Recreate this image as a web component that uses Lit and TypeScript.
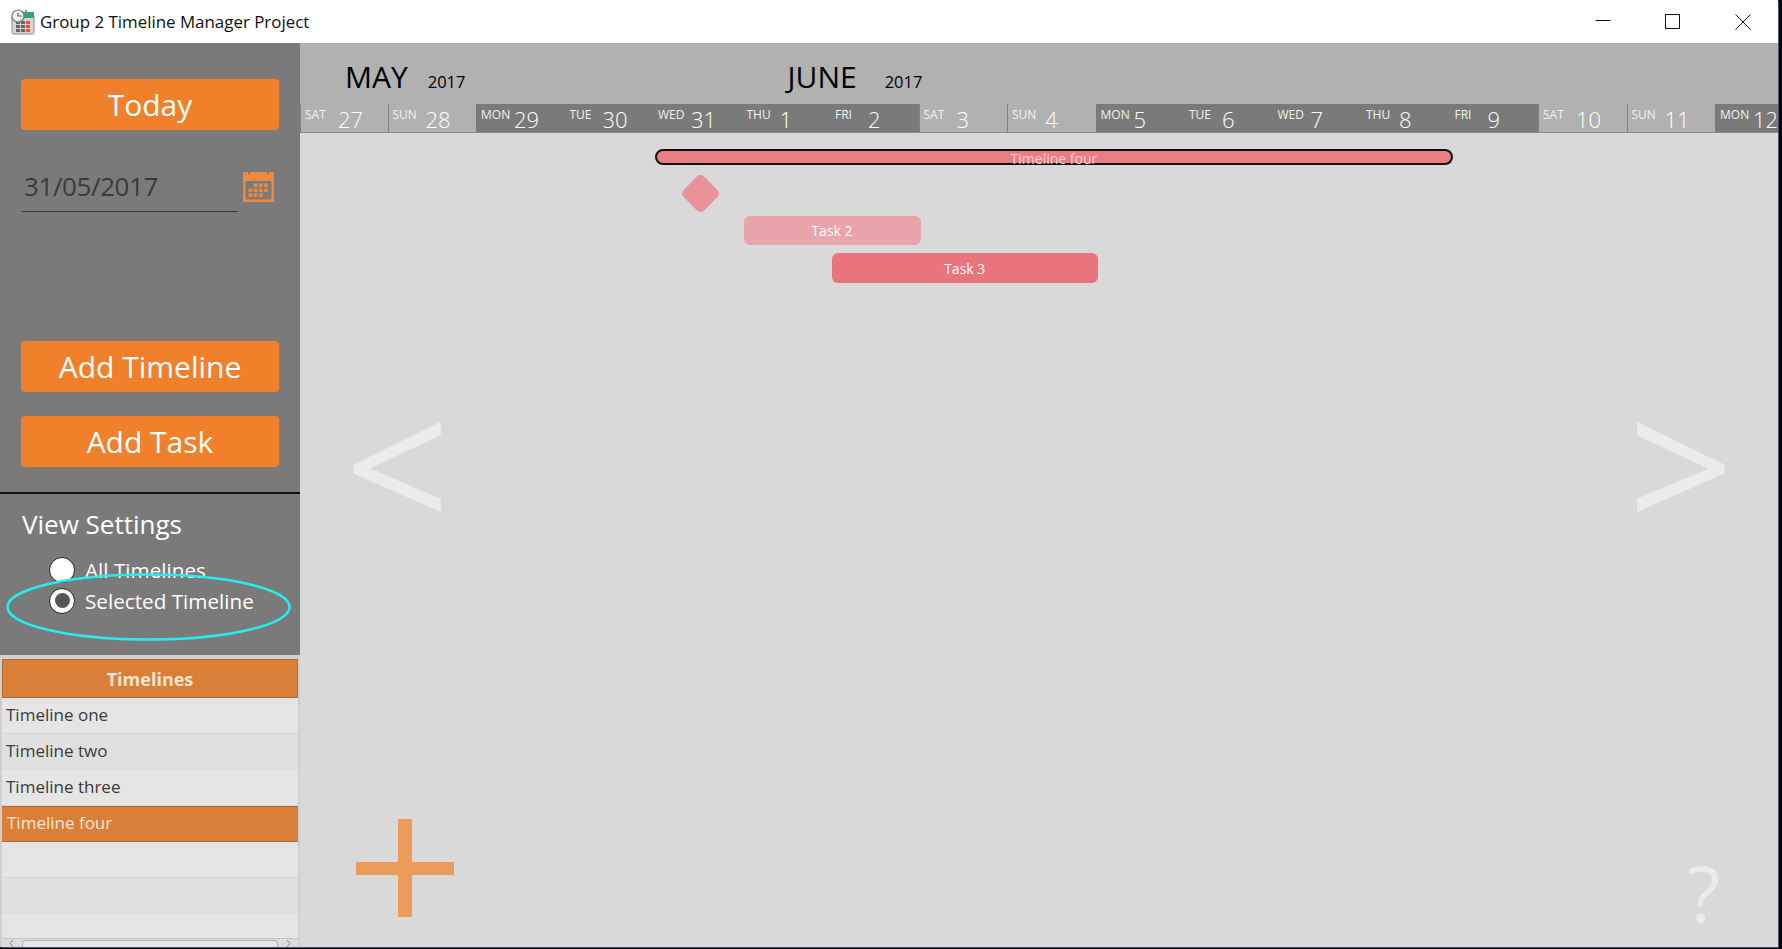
import { LitElement, html, css, svg } from 'lit';
import { customElement } from 'lit/decorators.js';

const DAY_W = 88.5;

const days = [
  ['SAT', 27], ['SUN', 28], ['MON', 29], ['TUE', 30], ['WED', 31], ['THU', 1], ['FRI', 2],
  ['SAT', 3], ['SUN', 4], ['MON', 5], ['TUE', 6], ['WED', 7], ['THU', 8], ['FRI', 9],
  ['SAT', 10], ['SUN', 11], ['MON', 12],
] as const;

const timelines = ['Timeline one', 'Timeline two', 'Timeline three', 'Timeline four', '', '', ''];

// grid of little squares for the calendar icon
const calendarCells = () => {
  const out = [];
  for (let r = 0; r < 3; r++) {
    for (let c = 0; c < 4; c++) {
      if (r === 0 && c === 0) continue;
      if (r === 2 && c === 3) continue;
      out.push(svg`<rect x=${5.5 + c * 5.2} y=${12.5 + r * 5} width="3.8" height="3.6"></rect>`);
    }
  }
  return out;
};

@customElement('app-root')
export class AppRoot extends LitElement {
  static styles = css`
    :host {
      display: block;
      width: 1782px;
      height: 949px;
      background: #000;
      overflow: hidden;
      font-family: 'Open Sans', 'Noto Sans', sans-serif;
    }
    .window {
      width: 1778px;
      height: 947px;
      display: flex;
      flex-direction: column;
      background: #fff;
      box-shadow: 1px 1px 0 #4a4a80;
    }
    .titlebar {
      height: 43px;
      flex: none;
      display: flex;
      align-items: center;
      background: #fff;
      color: #111;
      font-size: 16.9px;
    }
    .app-icon {
      margin-left: 11px;
      margin-right: 5px;
      flex: none;
    }
    .title {
      flex: 1;
      white-space: nowrap;
    }
    .controls {
      display: flex;
      align-items: center;
      margin-right: 27px;
      gap: 54px;
    }
    .content {
      flex: 1;
      display: flex;
      min-height: 0;
    }
    .sidebar {
      width: 300px;
      flex: none;
      display: flex;
      flex-direction: column;
      background: #cfcfcf;
    }
    .actions {
      height: 451px;
      flex: none;
      box-sizing: border-box;
      background: #7a7a7a;
      padding: 36px 21px 0;
      border-bottom: 2px solid #111;
    }
    .btn {
      width: 258px;
      height: 51px;
      display: flex;
      align-items: center;
      justify-content: center;
      background: #f1802a;
      color: #fff;
      border-radius: 4px;
      font-size: 30px;
      line-height: 1;
    }
    .date-row {
      display: flex;
      align-items: flex-end;
      margin: 37px 0 129px;
    }
    .date {
      width: 216px;
      height: 45px;
      margin-left: 1px;
      box-sizing: border-box;
      display: flex;
      align-items: center;
      padding: 0 0 6px 2px;
      border-bottom: 1px solid #3f3f3f;
      color: #3a3a3a;
      font-size: 26px;
      letter-spacing: -0.4px;
    }
    .cal {
      margin: 0 0 10px 5px;
    }
    .btn + .btn {
      margin-top: 24px;
    }
    .view {
      position: relative;
      height: 161px;
      flex: none;
      box-sizing: border-box;
      background: #7a7a7a;
      padding: 12px 22px 0;
      color: #fff;
    }
    .view h2 {
      margin: 0 0 12px;
      font-size: 26px;
      font-weight: 400;
      line-height: 36px;
    }
    .radio {
      height: 31px;
      display: flex;
      align-items: center;
      gap: 10px;
      padding-left: 27px;
      font-size: 20.7px;
      white-space: nowrap;
    }
    .dot {
      width: 26px;
      height: 26px;
      flex: none;
      box-sizing: border-box;
      display: flex;
      align-items: center;
      justify-content: center;
      background: #fff;
      border: 1px solid #222;
      border-radius: 50%;
    }
    .dot.on::after {
      content: '';
      width: 15px;
      height: 15px;
      border-radius: 50%;
      background: #555;
    }
    .ring {
      position: absolute;
      left: 0;
      top: 79px;
      pointer-events: none;
    }
    .list {
      flex: 1;
      min-height: 0;
      display: flex;
      flex-direction: column;
      margin: 4px 2px 0;
      background: #e5e5e5;
    }
    .list-head {
      height: 39px;
      flex: none;
      box-sizing: border-box;
      display: flex;
      align-items: center;
      justify-content: center;
      background: #da7f38;
      border: 1px solid #b56a30;
      color: #f8e4d2;
      font-size: 18px;
      font-weight: 700;
    }
    .row {
      height: 36px;
      flex: none;
      box-sizing: border-box;
      display: flex;
      align-items: center;
      padding: 0 0 2px 4px;
      border-bottom: 1px solid #d8d8d8;
      color: #3b3b3b;
      font-size: 17px;
    }
    .row:nth-of-type(odd) {
      background: #e0e0e0;
    }
    .row.short {
      height: 24px;
      border-bottom: 0;
    }
    .row.selected {
      background: #da7f38;
      border-bottom: 1px solid #b56a30;
      border-top: 1px solid #b56a30;
      color: #fbe6d5;
      padding: 0 0 3px 5px;
    }
    .scroll {
      flex: 1;
      display: flex;
      align-items: flex-end;
      gap: 6px;
      padding: 0 6px;
      background: #dcdcdc;
      border-top: 1px solid #c4c4c4;
      overflow: hidden;
    }
    .thumb {
      flex: 1;
      height: 6px;
      border: 1px solid #b0b0b0;
      border-bottom: 0;
      border-radius: 4px 4px 0 0;
      background: #e6e6e6;
    }
    .main {
      flex: 1;
      min-width: 0;
      display: flex;
      flex-direction: column;
      background: #d9d9d9;
    }
    .months {
      height: 61px;
      flex: none;
      display: flex;
      align-items: flex-end;
      padding: 0 0 12px 45px;
      box-sizing: border-box;
      background: #b1b1b1;
      color: #000;
      line-height: 1;
    }
    .month {
      font-size: 30px;
    }
    .year {
      font-size: 16.5px;
      margin-left: 20px;
    }
    .month-june {
      flex: none;
      display: flex;
      align-items: baseline;
      margin-left: 322px;
    }
    .month-june .year {
      margin-left: 28px;
    }
    .month-may {
      display: flex;
      align-items: baseline;
    }
    .days {
      height: 29px;
      flex: none;
      display: flex;
      overflow: hidden;
      background: #b1b1b1;
    }
    .day {
      flex: none;
      box-sizing: border-box;
      height: 29px;
      display: flex;
      padding-left: 5px;
      color: #fff;
      background: #7a7a7a;
      border-bottom: 1px solid #8a8a8a;
    }
    .day.weekend {
      background: #b1b1b1;
      border-left: 1px solid #808080;
      padding-left: 4px;
    }
    .day-name {
      width: 33px;
      flex: none;
      font-size: 12px;
      line-height: 22px;
      color: #f2f2f2;
    }
    .day-num {
      font-size: 22px;
      line-height: 31px;
      font-weight: 300;
    }
    .canvas {
      flex: 1;
      position: relative;
      overflow: hidden;
    }
    .bar {
      position: absolute;
      box-sizing: border-box;
      display: flex;
      align-items: center;
      justify-content: center;
      color: #fff;
      font-size: 14px;
      border-radius: 6px;
      white-space: nowrap;
    }
    .bar.timeline {
      background: #e87e82;
      border: 2px solid #111;
      border-radius: 8px;
      color: #f6cfd0;
      padding-top: 3px;
    }
    .bar.task2 {
      background: #e9a5a9;
    }
    .bar.task3 {
      background: #ea747e;
    }
    .diamond {
      position: absolute;
      width: 29px;
      height: 29px;
      border-radius: 5px;
      background: #e8939a;
      transform: rotate(45deg);
    }
    .nav {
      position: absolute;
      color: #ebebeb;
      font-size: 186px;
      line-height: 1;
    }
    .nav.prev {
      left: 44px;
      top: 236px;
    }
    .nav.next {
      right: 44px;
      top: 236px;
    }
    .help {
      position: absolute;
      right: 58px;
      bottom: 16px;
      color: #ebebeb;
      font-size: 76px;
      line-height: 1;
    }
    .plus {
      position: absolute;
      left: 56px;
      top: 686px;
      width: 98px;
      height: 98px;
    }
    .plus::before,
    .plus::after {
      content: '';
      position: absolute;
      background: #ec9c5a;
    }
    .plus::before {
      left: 0;
      right: 0;
      top: 43px;
      height: 13px;
    }
    .plus::after {
      top: 0;
      bottom: 0;
      left: 42px;
      width: 14px;
    }
  `;

  bar(cls: string, from: number, to: number, top: number, height: number, label: string) {
    const left = 1 + from * DAY_W;
    const width = (to - from) * DAY_W;
    return html`<div
      class="bar ${cls}"
      style="left:${left}px;width:${width}px;top:${top}px;height:${height}px"
    >
      ${label}
    </div>`;
  }

  render() {
    return html`
      <div class="window">
        <div class="titlebar">
          <svg class="app-icon" width="24" height="26" viewBox="0 0 24 26">
            <rect x="1" y="6" width="22" height="19" rx="1.5" fill="#d6d6d6" stroke="#8a8a8a"></rect>
            <rect x="10" y="3" width="13" height="6" fill="#2fa37c"></rect>
            <rect x="14" y="1" width="2" height="4" fill="#8a8a8a"></rect>
            <rect x="5" y="12" width="4" height="3" fill="#666"></rect>
            <rect x="10" y="12" width="4" height="3" fill="#666"></rect>
            <rect x="15" y="12" width="4" height="3" fill="#e0523f"></rect>
            <rect x="5" y="16" width="4" height="3" fill="#666"></rect>
            <rect x="10" y="16" width="4" height="3" fill="#666"></rect>
            <rect x="15" y="16" width="4" height="3" fill="#e0523f"></rect>
            <rect x="5" y="20" width="4" height="3" fill="#666"></rect>
            <rect x="10" y="20" width="4" height="3" fill="#666"></rect>
            <rect x="15" y="20" width="4" height="3" fill="#e0523f"></rect>
            <circle cx="7" cy="7" r="6" fill="#f4f4f4" stroke="#777" stroke-width="1.2"></circle>
            <path d="M7 3.5V7H10.5" fill="none" stroke="#555" stroke-width="1.1"></path>
          </svg>
          <div class="title">Group 2 Timeline Manager Project</div>
          <div class="controls">
            <svg width="16" height="16" viewBox="0 0 16 16">
              <path d="M0.500 6.500H15.500" stroke="#111" fill="none"></path>
            </svg>
            <svg width="16" height="16" viewBox="0 0 16 16">
              <rect x="0.500" y="0.500" width="14" height="14" stroke="#111" fill="none"></rect>
            </svg>
            <svg width="16" height="16" viewBox="0 0 16 16">
              <path d="M0.500 0.500L15.500 15.500M15.500 0.500L0.500 15.500" stroke="#111" fill="none"></path>
            </svg>
          </div>
        </div>
        <div class="content">
          <aside class="sidebar">
            <div class="actions">
              <div class="btn">Today</div>
              <div class="date-row">
                <div class="date">31/05/2017</div>
                <svg class="cal" width="31" height="31" viewBox="0 0 31 31" fill="#ee8a3c">
                  <path
                    fill-rule="evenodd"
                    d="M0 1H5V3H7V1H24V3H26V1H31V31H0ZM2.500 10V28.500H28.500V10Z"
                  ></path>
                  ${calendarCells()}
                </svg>
              </div>
              <div class="btn">Add Timeline</div>
              <div class="btn">Add Task</div>
            </div>
            <div class="view">
              <h2>View Settings</h2>
              <div class="radio"><span class="dot"></span>All Timelines</div>
              <div class="radio"><span class="dot on"></span>Selected Timeline</div>
              <svg class="ring" width="300" height="70" viewBox="0 0 300 70">
                <ellipse cx="148.500" cy="34" rx="141" ry="32.500" fill="none" stroke="#22eef0" stroke-width="2.500"></ellipse>
              </svg>
            </div>
            <div class="list">
              <div class="list-head">Timelines</div>
              ${timelines.map(
                (t, i) =>
                  html`<div class="row ${i === 3 ? 'selected' : ''} ${i === 6 ? 'short' : ''}">${t}</div>`
              )}
              <div class="scroll">
                <svg width="8" height="8" viewBox="0 0 8 8">
                  <path d="M5 1L2 4.500L5 8" fill="none" stroke="#888"></path>
                </svg>
                <div class="thumb"></div>
                <svg width="8" height="8" viewBox="0 0 8 8">
                  <path d="M3 1L6 4.500L3 8" fill="none" stroke="#888"></path>
                </svg>
              </div>
            </div>
          </aside>
          <main class="main">
            <div class="months">
              <div class="month-may">
                <span class="month">MAY</span><span class="year">2017</span>
              </div>
              <div class="month-june">
                <span class="month">JUNE</span><span class="year">2017</span>
              </div>
            </div>
            <div class="days">
              ${days.map(
                ([name, num], i) => html`<div
                  class="day ${name === 'SAT' || name === 'SUN' ? 'weekend' : ''}"
                  style="width:${i === 0 ? DAY_W - 1 : DAY_W}px"
                >
                  <span class="day-name">${name}</span>
                  <span class="day-num">${num}</span>
                </div>`
              )}
            </div>
            <div class="canvas">
              ${this.bar('timeline', 3.995, 13.02, 16, 16, 'Timeline four')}
              <div class="diamond" style="left:${4.5 * DAY_W - 12}px;top:46px"></div>
              ${this.bar('task2', 5, 7, 83, 29, 'Task 2')}
              ${this.bar('task3', 6, 9, 120, 30, 'Task 3')}
              <div class="nav prev">&lt;</div>
              <div class="nav next">&gt;</div>
              <div class="help">?</div>
              <div class="plus"></div>
            </div>
          </main>
        </div>
      </div>
    `;
  }
}
